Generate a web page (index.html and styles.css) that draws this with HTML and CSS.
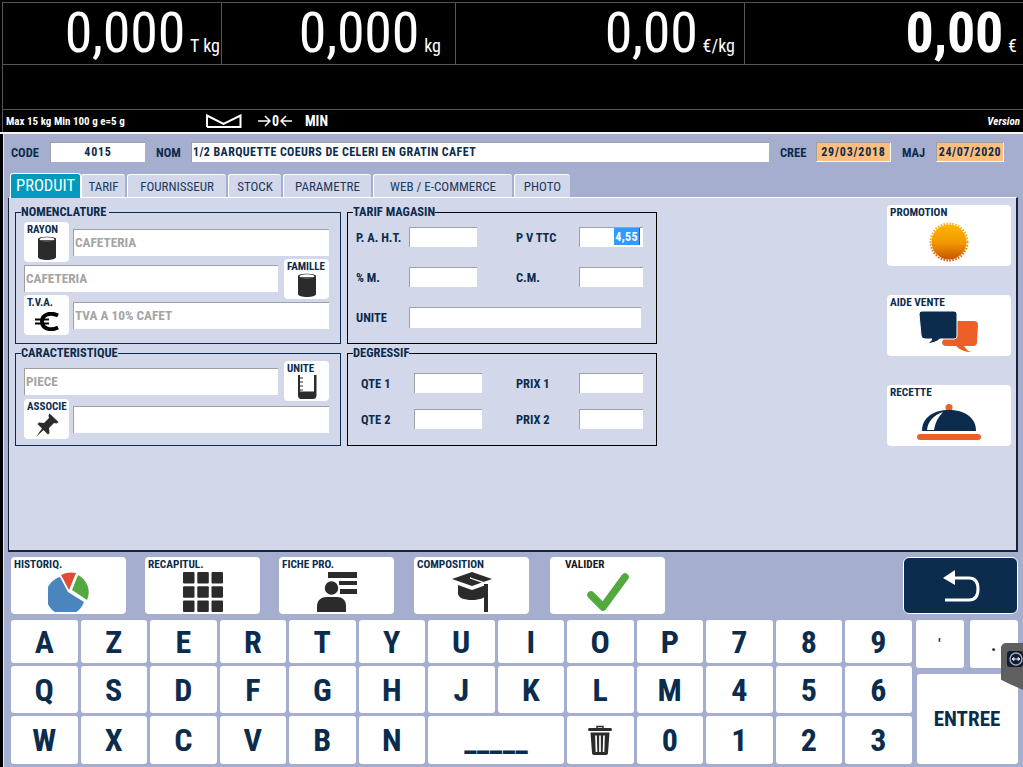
FILE: index.html
```html
<!DOCTYPE html>
<html lang="fr">
<head>
<meta charset="utf-8">
<title>Produit</title>
<link rel="stylesheet" href="styles.css">
</head>
<body>
<header class="scale">
  <div class="readouts">
    <div class="cell c1"><span class="num">0,000</span><span class="unit">T kg</span></div>
    <div class="cell c2"><span class="num">0,000</span><span class="unit">kg</span></div>
    <div class="cell c3"><span class="num">0,00</span><span class="unit">€/kg</span></div>
    <div class="cell c4"><span class="num strong">0,00</span><span class="unit">€</span></div>
  </div>
  <div class="message"></div>
  <div class="status">
    <span class="legal">Max 15 kg Min 100 g e=5 g</span>
    <svg class="tare" width="36" height="14" viewBox="0 0 36 14"><path d="M1 13V1.500L17.500 10 34.500 1.500V13H1" fill="none" stroke="#fff" stroke-width="2"/></svg>
    <span class="zero">
      <svg width="13" height="12" viewBox="0 0 13 12"><path d="M0 6H12M7 1 12 6 7 11" fill="none" stroke="#fff" stroke-width="1.500"/></svg>
      <span class="zero-digit">0</span>
      <svg width="12" height="12" viewBox="0 0 12 12"><path d="M12 6H1M6 1 1 6 6 11" fill="none" stroke="#fff" stroke-width="1.500"/></svg>
    </span>
    <span class="min">MIN</span>
    <span class="version">Version</span>
  </div>
</header>
<main class="form">
  <div class="idrow">
    <label class="lab lab-code">CODE</label><div class="field f-code">4015</div>
    <label class="lab lab-nom">NOM</label><div class="field f-nom">1/2 BARQUETTE COEURS DE CELERI EN GRATIN CAFET</div>
    <label class="lab lab-cree">CREE</label><div class="field date d1">29/03/2018</div>
    <label class="lab lab-maj">MAJ</label><div class="field date d2">24/07/2020</div>
  </div>
  <nav class="tabs">
    <div class="tab active t1">PRODUIT</div>
    <div class="tab t2">TARIF</div>
    <div class="tab t3">FOURNISSEUR</div>
    <div class="tab t4">STOCK</div>
    <div class="tab t5">PARAMETRE</div>
    <div class="tab t6">WEB / E-COMMERCE</div>
    <div class="tab t7">PHOTO</div>
  </nav>
  <section class="panel">
    <div class="col-left">
      <fieldset class="group g-nom">
        <legend>NOMENCLATURE&nbsp;</legend>
        <div class="irow r-left">
          <div class="ibtn"><b>RAYON</b><svg class="ico" width="18" height="24" viewBox="0 0 18 24"><use href="#can"/></svg></div>
          <div class="inp grey">CAFETERIA</div>
        </div>
        <div class="irow r-right">
          <div class="inp grey">CAFETERIA</div>
          <div class="ibtn"><b>FAMILLE</b><svg class="ico" width="18" height="24" viewBox="0 0 18 24"><use href="#can"/></svg></div>
        </div>
        <div class="irow r-left">
          <div class="ibtn"><b>T.V.A.</b>
            <svg class="ico euro" width="24" height="19" viewBox="0 0 24 19"><path d="M23 3.500C16 0 7 2 7 9.500S16 19 23 15.500" fill="none" stroke="#000" stroke-width="4"/><path d="M0 7.500H14M0 11.500H14" stroke="#000" stroke-width="2.200"/></svg></div>
          <div class="inp grey">TVA A 10% CAFET</div>
        </div>
      </fieldset>
      <fieldset class="group g-car">
        <legend>CARACTERISTIQUE</legend>
        <div class="irow r-right">
          <div class="inp grey">PIECE</div>
          <div class="ibtn"><b>UNITE</b>
            <svg class="ico" width="20" height="24" viewBox="0 0 20 24"><path d="M1 0H3V19Q3 20.500 4.500 20.500H15.500Q17 20.500 17 19V0H19.500V20Q19.500 24 16 24H4Q1 24 1 20Z" fill="#2b2b2b"/><path d="M3 16.500H17V21H3Z" fill="#2b2b2b"/><path d="M3 3H6M3 7H6M3 11H6M3 15H6" stroke="#2b2b2b" stroke-width="1"/></svg></div>
        </div>
        <div class="irow r-left">
          <div class="ibtn"><b>ASSOCIE</b>
            <svg class="ico" width="24" height="24" viewBox="0 0 24 24"><path d="M14.500 0.500 23.500 9 21.500 10.500 19 10 14 15 14.500 20 13 21.500 8.500 17 1 24 7 15.500 2.500 11 4 9.500 9 10 14 5 13.500 2.500Z" fill="#2b2b2b"/></svg></div>
          <div class="inp"></div>
        </div>
      </fieldset>
    </div>
    <div class="col-mid">
      <fieldset class="group black g-tarif">
        <legend>TARIF MAGASIN</legend>
        <div class="prow">
          <span class="plab w53">P. A. H.T.</span><div class="pinp w68"></div>
          <span class="plab w63 ml39">P V TTC</span><div class="pinp w64 sel"><span class="hl">4,55</span></div>
        </div>
        <div class="prow">
          <span class="plab w53">% M.</span><div class="pinp w68"></div>
          <span class="plab w63 ml39">C.M.</span><div class="pinp w64"></div>
        </div>
        <div class="prow">
          <span class="plab w53">UNITE</span><div class="pinp wide"></div>
        </div>
      </fieldset>
      <fieldset class="group black g-deg">
        <legend>DEGRESSIF</legend>
        <div class="drow">
          <span class="plab w53">QTE 1</span><div class="pinp w68"></div>
          <span class="plab w63 ml34">PRIX 1</span><div class="pinp w64"></div>
        </div>
        <div class="drow">
          <span class="plab w53">QTE 2</span><div class="pinp w68"></div>
          <span class="plab w63 ml34">PRIX 2</span><div class="pinp w64"></div>
        </div>
      </fieldset>
    </div>
    <div class="col-right">
      <div class="tbtn side s-promo"><b>PROMOTION</b>
        <svg class="ico-side" width="40" height="40" viewBox="0 0 40 40"><defs><linearGradient id="sun" x1="0" y1="0" x2="0" y2="1"><stop offset="0" stop-color="#ffb300"/><stop offset=".5" stop-color="#f29a00"/><stop offset="1" stop-color="#c85500"/></linearGradient></defs><circle cx="20" cy="20" r="17.500" fill="url(#sun)"/><circle cx="20" cy="20" r="18.500" fill="none" stroke="url(#sun)" stroke-width="2" stroke-dasharray="1.500 1.500"/></svg>
      </div>
      <div class="tbtn side"><b>AIDE VENTE</b>
        <svg class="ico-side" width="62" height="42" viewBox="0 0 62 42"><path d="M35 10H56Q60 10 60 14L59 31Q59 35 55 35H46Q49 40 53 41 44 41 38 35H28Q24 35 24 31Z" fill="#ee5f27"/><path d="M4 0H36Q39 0 39 3V25Q39 28 36 28H22Q18 32 8 33 13 31 14 28H7Q3 28 3 24L1 3Q1 0 4 0Z" fill="#0b2c4d" stroke="#fff" stroke-width="1"/></svg>
      </div>
      <div class="tbtn side s-rec"><b>RECETTE</b>
        <svg class="ico-side" width="66" height="38" viewBox="0 0 66 38"><circle cx="33" cy="4.500" r="3.500" fill="#ee5f27"/><path d="M6 28C6 14 18 7 33 7S60 14 60 28Z" fill="#0b2c4d"/><path d="M11 27C12 18 18 12 27 9 22 14 19 20 18 27Z" fill="#fff"/><rect x="1" y="31" width="64" height="6" rx="3" fill="#ee5f27"/></svg>
      </div>
    </div>
  </section>
  <div class="toolbar">
    <div class="tbtn tool"><b>HISTORIQ.</b>
      <svg class="ico-tool" width="42" height="40" viewBox="0 0 42 40"><path d="M20 20 12 5A19.500 19.500 0 1 0 36 30Z" fill="#4a86bd"/><path d="M13 3Q20-.5 28 1L21 18Z" fill="#de4b36"/><path d="M30 3A19 19 0 0 1 39 28L24 18Z" fill="#53a93f"/></svg>
    </div>
    <div class="tbtn tool"><b>RECAPITUL.</b>
      <svg class="ico-tool" width="40" height="40" viewBox="0 0 40 40" fill="#2b2b2b"><rect width="11.500" height="11.500" rx="1"/><rect x="14.300" width="11.500" height="11.500" rx="1"/><rect x="28.500" width="11.500" height="11.500" rx="1"/><rect y="14.300" width="11.500" height="11.500" rx="1"/><rect x="14.300" y="14.300" width="11.500" height="11.500" rx="1"/><rect x="28.500" y="14.300" width="11.500" height="11.500" rx="1"/><rect y="28.500" width="11.500" height="11.500" rx="1"/><rect x="14.300" y="28.500" width="11.500" height="11.500" rx="1"/><rect x="28.500" y="28.500" width="11.500" height="11.500" rx="1"/></svg>
    </div>
    <div class="tbtn tool"><b>FICHE PRO.</b>
      <svg class="ico-tool" width="40" height="40" viewBox="0 0 40 40" fill="#2b2b2b"><rect x="11" y="0" width="29" height="6"/><rect x="22" y="9" width="18" height="4"/><rect x="23" y="17" width="17" height="5"/><circle cx="14.500" cy="16" r="7.500" stroke="#fff" stroke-width="1.500"/><path d="M0 40V34C0 28 5 25 9 25H20C25 25 29 28 29 34V40Z"/></svg>
    </div>
    <div class="tbtn tool"><b>COMPOSITION</b>
      <svg class="ico-tool" width="40" height="40" viewBox="0 0 40 40" fill="#2b2b2b"><path d="M20 0 40 7 20 14 0 7Z"/><path d="M6 13 20 18 34 13V21C34 26 28 28 20 28S6 26 6 21Z"/><path d="M18 6 33 11V38Q33 40 35 40V12Z" stroke="#fff" stroke-width="1.200"/><rect x="32" y="12" width="4" height="28"/></svg>
    </div>
    <div class="tbtn tool"><b class="center-lab">VALIDER</b>
      <svg class="ico-tool" width="42" height="40" viewBox="0 0 42 40"><path d="M4 23 16 35 38 5" fill="none" stroke="#53a93f" stroke-width="7.500" stroke-linecap="round" stroke-linejoin="round"/></svg>
    </div>
    <div class="back">
      <svg width="38" height="34" viewBox="0 0 38 34"><path d="M1 9 13 1V16Z" fill="#fff"/><path d="M10 9H27Q36 9 36 20T27 31H3" fill="none" stroke="#fff" stroke-width="3"/></svg>
    </div>
  </div>
  <div class="keyboard">
    <div class="keys">
      <div class="key">A</div><div class="key">Z</div><div class="key">E</div><div class="key">R</div><div class="key">T</div><div class="key">Y</div><div class="key">U</div><div class="key">I</div><div class="key">O</div><div class="key">P</div><div class="key">7</div><div class="key">8</div><div class="key">9</div>
      <div class="key">Q</div><div class="key">S</div><div class="key">D</div><div class="key">F</div><div class="key">G</div><div class="key">H</div><div class="key">J</div><div class="key">K</div><div class="key">L</div><div class="key">M</div><div class="key">4</div><div class="key">5</div><div class="key">6</div>
      <div class="key">W</div><div class="key">X</div><div class="key">C</div><div class="key">V</div><div class="key">B</div><div class="key">N</div><div class="key space"><span class="bar">_____</span></div>
      <div class="key"><svg width="24" height="30" viewBox="0 0 24 30"><path d="M9 3V1.500H15V3" fill="none" stroke="#2b2b2b" stroke-width="1.500"/><rect y="3" width="24" height="3" rx="1.500" fill="#2b2b2b"/><path d="M2.500 7.500H21.500L20 28Q20 30 18 30H6Q4 30 4 28Z" fill="#2b2b2b"/><path d="M8 10.500 8.500 27M12 10.500V27M16 10.500 15.500 27" stroke="#fff" stroke-width="1.700"/></svg></div>
      <div class="key">0</div><div class="key">1</div><div class="key">2</div><div class="key">3</div>
    </div>
    <div class="keys-side">
      <div class="key mini">'</div><div class="key mini dot">.</div>
      <div class="key enter">ENTREE</div>
    </div>
  </div>
</main>
<aside class="remote"><span class="remote-ico"><svg width="16" height="16" viewBox="0 0 16 16"><circle cx="9" cy="8" r="6" fill="none" stroke="#9aa" stroke-width="1.500"/><path d="M5 8H13M5 8 7 6.500V9.500ZM13 8 11 6.500V9.500Z" stroke="#dde" fill="#dde"/></svg></span></aside>
<svg class="defs" width="0" height="0"><defs>
  <g id="can"><path d="M0 3C0 0 18 0 18 3V21C18 25 0 25 0 21Z" fill="#2b2b2b"/><ellipse cx="9" cy="3.200" rx="7.500" ry="2" fill="#fff"/><path d="M2 4C5 6.500 13 6.500 16 4" fill="#555"/></g>
</defs></svg>
</body>
</html>
```
FILE: styles.css
```css
* { box-sizing: border-box; }
html, body { margin: 0; padding: 0; }
body {
  width: 1023px; height: 767px; overflow: hidden; position: relative;
  background: #000; font-family: "Roboto Condensed", "Roboto", "Liberation Sans", sans-serif;
  font-stretch: 80%; color: #0b2c4d;
}
.defs { display: block; height: 0; }

/* Scale header */
.scale { height: 134px; background: #000; padding: 2px 0 0 2px; border-bottom: 2px solid #f4f4f4; color: #fff; }
.readouts {
  height: 63px; border: 1px solid #565656; border-width: 1px 0 1px 1px;
  display: grid; grid-template-columns: 219px 234px 289px 1fr;
}
.cell { display: flex; justify-content: flex-end; align-items: baseline; border-right: 1px solid #565656; height: 61px; line-height: 61px; }
.cell:last-child { border-right: 0; }
.c1 { padding-right: 1px; } .c2 { padding-right: 14px; } .c3 { padding-right: 9px; } .c4 { padding-right: 6px; }
.num { font-size: 56px; font-weight: 400; letter-spacing: -.25px; }
.num.strong { font-weight: 700; }
.unit { font-size: 18px; margin-left: 5px; }
.message { height: 45px; border: 1px solid #565656; border-width: 0 0 1px 1px; }
.status { height: 22px; border-left: 1px solid #565656; display: flex; align-items: center; padding: 0 3px 0 3px; font-weight: 700; }
.legal { font-size: 11px; width: 200px; }
.tare { margin-right: 16px; }
.zero { width: 47px; display: flex; align-items: center; font-size: 14px; }
.zero-digit { margin: 0 1px; }
.min { font-size: 14px; }
.version { margin-left: auto; font-size: 11px; font-style: italic; }

/* Form */
.form { height: 633px; margin-left: 3px; border-left: 1px solid #e8e8e8; background: #a5aece; padding-top: 8px; }
.idrow { display: flex; align-items: center; height: 20px; }
.lab { font-size: 12.500px; font-weight: 700; }
.lab-code { margin-left: 7px; width: 39px; }
.lab-nom { margin-left: 11px; width: 35px; }
.lab-cree { margin-left: 11px; width: 36px; }
.lab-maj { margin-left: 11px; width: 34px; }
.field { height: 20px; background: #fff; border: 1px solid #a0a0a0; border-width: 1px 0 0 1px; font-size: 12px; font-weight: 700; line-height: 19px; letter-spacing: .4px; white-space: nowrap; }
.f-code { width: 95px; text-align: center; letter-spacing: .8px; }
.f-nom { width: 578px; padding-left: 1px; }
.date { background: #ffbe7d; text-align: center; border-color: #a0a0a0; border-right: 1px solid #fff; border-bottom: 1px solid #fff; letter-spacing: .8px; }
.d1 { width: 75px; } .d2 { width: 68px; letter-spacing: .6px; }

.tabs { display: flex; align-items: flex-end; margin: 11px 0 0 6px; height: 24px; gap: 2px; position: relative; z-index: 1; }
.tab { height: 23px; background: #d3d7ea; border: 1px solid #fff; border-width: 1px 0 0 1px; border-radius: 3px 3px 0 0; font-size: 13px; text-align: center; line-height: 24px; color: #1c3a5e; white-space: nowrap; }
.tab.active { height: 25px; background: #009abb; color: #fff; font-size: 16.500px; line-height: 23px; border-width: 1px 1px 0 1px; margin-bottom: -1px; }
.t1 { width: 71px; } .t2 { width: 44px; margin-left: -2px; } .t3 { width: 99px; } .t4 { width: 53px; } .t5 { width: 88px; } .t6 { width: 139px; } .t7 { width: 56px; }

.panel {
  margin: 0 5px 0 4px; height: 355px; background: #d3d7ea;
  border: 1px solid #fff; border-left: 1px solid #1a2338; border-right: 2px solid #1a2338; border-bottom: 2px solid #1a2338;
  display: flex; padding: 7px 0 0 6px; position: relative;
}
.col-left { width: 326px; }
.col-mid { width: 310px; margin-left: 6px; }
.col-right { margin-left: 230px; width: 124px; }

fieldset.group { margin: 0; padding: 0 11px 0 8px; border: 1px solid #0b2c4d; min-width: 0; }
fieldset.group.black { border-color: #000; padding: 0; }
.group legend { font-size: 12.500px; font-weight: 700; padding: 0; margin-left: -3px; line-height: 14px; color: #0b2c4d; }
.group.black legend { margin-left: 5px; }
fieldset.group.g-nom { height: 139px; padding-top: 5px; }
fieldset.group.g-car { height: 100px; margin-top: 2px; padding-top: 2px; }
fieldset.group.g-tarif { height: 139px; }
fieldset.group.g-deg { height: 100px; margin-top: 2px; padding-top: 5px; }

.irow { display: flex; align-items: center; height: 36.500px; justify-content: space-between; }
.g-car .irow { height: 38px; }
.inp { height: 27px; background: #fff; border: 1px solid #a0a0a0; border-width: 1px 0 0 1px; font-size: 13.300px; font-weight: 700; line-height: 26px; padding-left: 1px; white-space: nowrap; }
.inp.grey { color: #a4a4a4; }
.r-left .inp { width: 256px; }
.r-right .inp { width: 254px; }
.ibtn { flex: none; width: 45px; height: 40px; background: #fff; border-radius: 4px; display: flex; flex-direction: column; align-items: center; position: relative; z-index: 1; margin: -2px 0; }
.ibtn b { align-self: flex-start; margin-left: 3px; font-size: 11px; line-height: 12px; margin-top: 2px; white-space: nowrap; color: #0b2c4d; }
.ico { flex: none; margin-top: 0; }
.ico.euro { margin-top: 3px; }

.prow { display: flex; align-items: center; height: 40px; padding-left: 8px; }
.prow:first-of-type { margin-top: -2px; }
.prow .pinp { height: 20px; }
.prow .pinp.wide { height: 21px; width: 232px; }
.drow { display: flex; align-items: center; height: 36px; padding-left: 13px; }
.plab { font-size: 12.500px; font-weight: 700; white-space: nowrap; flex: none; }
.w53 { width: 53px; } .w63 { width: 63px; }
.ml39 { margin-left: 39px; } .ml34 { margin-left: 34px; }
.pinp { flex: none; height: 20px; background: #fff; border: 1px solid #a0a0a0; border-width: 1px 0 0 1px; font-size: 12px; font-weight: 700; }
.w68 { width: 68px; } .w64 { width: 64px; }
.sel { text-align: right; padding-right: 3px; line-height: 18px; }
.hl { background: #3399ff; color: #fff; display: inline-block; height: 17px; padding: 0 1px; border-right: 1px solid #c23; letter-spacing: .4px; }

.tbtn { background: #fff; border-radius: 4px; display: flex; flex-direction: column; align-items: center; position: relative; }
.tbtn b { align-self: flex-start; font-size: 11.300px; line-height: 12px; margin: 2px 0 0 3px; color: #0b2c4d; }
.side { width: 124px; height: 61px; margin-bottom: 29px; }
.ico-side { flex: none; margin-top: 2px; }
.s-promo .ico-side { margin-top: 3px; }
.s-rec .ico-side { margin-top: 4px; }

.toolbar { display: flex; margin: 5px 0 0 7px; height: 57px; }
.tool { width: 115px; height: 57px; margin-right: 19px; }
.tool:nth-child(3) { margin-right: 20px; }
.tool:nth-child(4) { margin-right: 21px; }
.tool b.center-lab { margin-left: 15px; color: #1a1a1a; }
.ico-tool { flex: none; margin-top: 1px; }
.back { margin-left: 219px; width: 115px; height: 57px; background: #0b2c4d; border: 1px solid #fff; border-radius: 6px; display: flex; align-items: center; justify-content: center; }

.keyboard { display: flex; margin: 6px 0 0 7px; }
.keys { display: grid; grid-template-columns: repeat(13, 66.500px); grid-template-rows: 43px 47px 48px; gap: 3px; }
.key { background: #fff; border-radius: 3px; display: flex; align-items: center; justify-content: center; font-size: 32px; font-weight: 700; color: #0b2c4d; }
.space { grid-column: span 2; }
.bar { font-size: 32px; line-height: 32px; }
.keys-side { margin-left: 4px; width: 102px; display: grid; grid-template-columns: 48px 48px; grid-template-rows: 48px 90px; column-gap: 6px; row-gap: 6px; }
.mini { font-size: 14px; }
.dot { font-size: 18px; }
.enter { grid-column: span 2; font-size: 21px; margin-left: 1px; }

.remote { position: absolute; left: 1001px; top: 643px; width: 22px; height: 47px; background: #5f5f5f; border-radius: 5px 0 0 0; clip-path: polygon(0 0, 100% 0, 100% 100%, 30% 85%, 0 78%); padding: 8px 0 0 6px; }
.remote-ico { display: block; width: 16px; height: 16px; background: #121a33; border-radius: 3px; }
```
